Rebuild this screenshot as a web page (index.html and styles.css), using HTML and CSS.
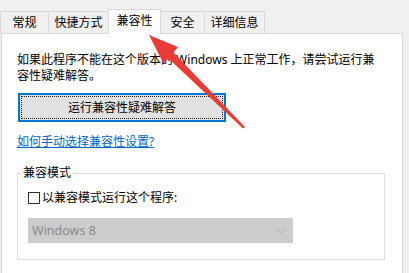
FILE: index.html
```html
<!DOCTYPE html>
<html lang="zh-CN">
<head>
<meta charset="utf-8">
<title>属性 - 兼容性</title>
<link rel="stylesheet" href="styles.css">
</head>
<body>
<div class="window">
  <div class="tabs">
    <div class="tab t1">常规</div>
    <div class="tab t2">快捷方式</div>
    <div class="tab t3 active">兼容性</div>
    <div class="tab t4">安全</div>
    <div class="tab t5">详细信息</div>
  </div>
  <div class="panel">
    <p class="intro">如果此程序不能在这个版本的 Windows 上正常工作，请尝试运行兼<br>容性疑难解答。</p>
    <div class="btn"><span>运行兼容性疑难解答</span></div>
    <a class="link" href="#">如何手动选择兼容性设置?</a>
    <div class="group">
      <div class="legend">兼容模式</div>
      <label class="check"><span class="box"></span><span>以兼容模式运行这个程序:</span></label>
      <div class="select">
        <span>Windows 8</span>
        <svg class="chev" width="10" height="6" viewBox="0 0 10 6"><path d="M1 1 L5 5 L9 1" fill="none" stroke="#b4b4b4" stroke-width="1"/></svg>
      </div>
    </div>
  </div>
  <svg class="arrow" width="409" height="273" viewBox="0 0 409 273">
    <polygon points="149,35 178,47 173.5,52.5 245,127 243,128.5 168.5,58.5 163.5,63.5" fill="#ec3b36"/>
  </svg>
</div>
</body>
</html>
```

FILE: styles.css
```css
html, body {
  margin: 0;
  padding: 0;
  background: #ffffff;
}
body {
  font-family: "Noto Sans", "Noto Sans CJK SC", sans-serif;
  font-size: 12px;
  color: #000;
}
.window {
  position: relative;
  width: 409px;
  height: 273px;
  overflow: hidden;
  background: #f0f0f0;
}
.tabs {
  display: flex;
  align-items: flex-end;
  height: 33px;
  padding-left: 0;
  box-sizing: border-box;
}
.tab {
  height: 22px;
  box-sizing: border-box;
  border: 1px solid #d9d9d9;
  border-bottom: none;
  margin-right: -1px;
  background: #f0f0f0;
  display: flex;
  align-items: center;
  justify-content: center;
  line-height: 16px;
  padding-top: 1px;
}
.t1 { width: 49px; }
.t2 { width: 61px; }
.t3 { width: 53px; }
.t4 { width: 45px; }
.t5 { width: 61px; }
.tab.active {
  height: 25px;
  margin-bottom: -1px;
  background: #ffffff;
  position: relative;
  z-index: 1;
  padding-top: 0;
  padding-bottom: 2px;
}
.panel {
  margin-left: 1px;
  width: 402px;
  height: 260px;
  box-sizing: border-box;
  background: #ffffff;
  border: 1px solid #d9d9d9;
  padding: 18px 0 0 15px;
}
.intro {
  margin: 0;
  line-height: 16px;
  white-space: nowrap;
}
.btn {
  margin: 9px 0 0 1px;
  width: 208px;
  height: 29px;
  box-sizing: border-box;
  border: 2px solid #0078d7;
  background: #e1e1e1;
  display: flex;
  align-items: center;
  justify-content: center;
  outline: 1px dotted #222;
  outline-offset: -4px;
}
.btn span {
  line-height: 16px;
}
.link {
  display: inline-block;
  margin-top: 12px;
  line-height: 16px;
  color: #0066cc;
  text-decoration: underline;
}
.group {
  margin-top: 23px;
  width: 368px;
  height: 87px;
  box-sizing: border-box;
  border: 1px solid #dcdcdc;
  padding: 0 0 0 10px;
}
.legend {
  width: fit-content;
  margin: -9px 0 0 -7px;
  padding: 0 2px;
  background: #ffffff;
  line-height: 16px;
}
.check {
  display: flex;
  align-items: center;
  margin-top: 9px;
  line-height: 16px;
}
.box {
  width: 12px;
  height: 12px;
  box-sizing: border-box;
  border: 1px solid #333;
  margin-right: 2px;
  background: #fff;
}
.select {
  margin-top: 12px;
  width: 265px;
  height: 25px;
  box-sizing: border-box;
  background: #cccccc;
  display: flex;
  align-items: center;
  justify-content: space-between;
  padding: 0 7px 0 4px;
  color: #8a8a8a;
  font-size: 12.5px;
}
.arrow {
  position: absolute;
  left: 0;
  top: 0;
  z-index: 5;
}
```
